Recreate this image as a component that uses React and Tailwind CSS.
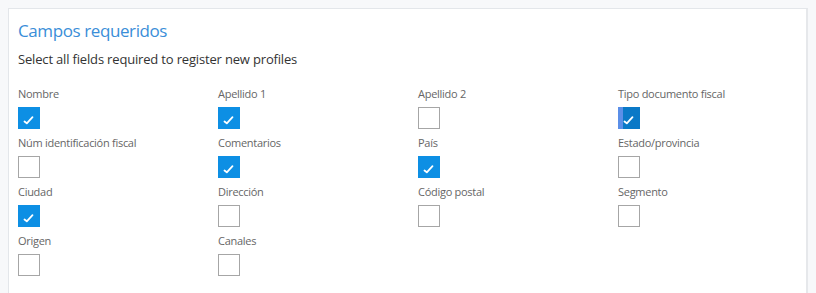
import React from 'react'

const fields = [
  { label: 'Nombre', checked: true },
  { label: 'Apellido 1', checked: true },
  { label: 'Apellido 2', checked: false },
  { label: 'Tipo documento fiscal', checked: true, focused: true },
  { label: 'Núm identificación fiscal', checked: false },
  { label: 'Comentarios', checked: true },
  { label: 'País', checked: true },
  { label: 'Estado/provincia', checked: false },
  { label: 'Ciudad', checked: true },
  { label: 'Dirección', checked: false },
  { label: 'Código postal', checked: false },
  { label: 'Segmento', checked: false },
  { label: 'Origen', checked: false },
  { label: 'Canales', checked: false },
]

function Check() {
  return (
    <svg width="22" height="22" viewBox="0 0 22 22" className="block">
      <path d="M6.5 14.5 L8.8 16.3 L14.5 10.2" fill="none" stroke="white" strokeWidth="1.8" strokeLinecap="round" strokeLinejoin="round" />
    </svg>
  )
}

function Box({ checked, focused }) {
  if (checked && focused) {
    return (
      <div className="relative w-[22px] h-[22px] bg-[#0a79c7]">
        <span className="absolute left-0 top-0 bottom-0 w-[5px] bg-[#5b8fe8]" />
        <span className="absolute inset-0"><Check /></span>
      </div>
    )
  }
  if (checked) {
    return (
      <div className="w-[22px] h-[22px] bg-[#0d8fe4]">
        <Check />
      </div>
    )
  }
  return <div className="w-[22px] h-[22px] border border-[#a6a6a6] bg-white" />
}

export default function App() {
  return (
    <div className="h-[293px] bg-[#f7f8fa] pt-2 pl-2 pr-2 font-['Open_Sans',sans-serif] overflow-hidden">
      <div className="bg-white border border-[#e3e6ea] border-r-2 border-r-[#e6e8eb] pl-[9px] pt-[9px] pb-8 w-[800px]">
        <h2 className="text-[17px] leading-[25px] tracking-[-0.4px] text-[#3a8ed8] font-normal">Campos requeridos</h2>
        <p className="mt-[7px] text-[13px] leading-[18px] tracking-[-0.17px] text-[#333]">Select all fields required to register new profiles</p>
        <div className="mt-[18px] grid grid-cols-[200px_200px_200px_200px]">
          {fields.map((f) => (
            <div key={f.label} className="flex flex-col pb-[6px]">
              <span className="text-[11px] leading-[15px] tracking-[-0.28px] text-[#666] mb-[6px]">{f.label}</span>
              <Box checked={f.checked} focused={f.focused} />
            </div>
          ))}
        </div>
      </div>
    </div>
  )
}
